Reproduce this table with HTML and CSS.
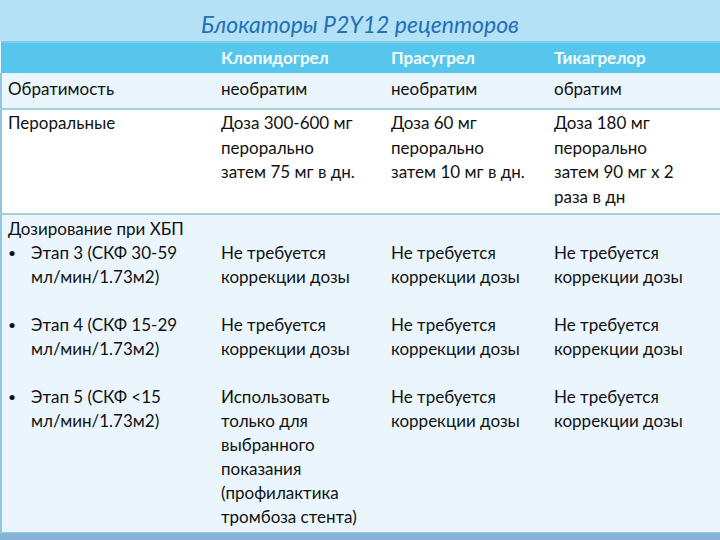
FILE: index.html
```html
<!DOCTYPE html>
<html lang="ru">
<head>
<meta charset="utf-8">
<link rel="stylesheet" href="styles.css">
</head>
<body>
<div class="page">
  <div class="title-band">
    <h1 class="title">Блокаторы P2Y12 рецепторов</h1>
  </div>
  <table class="grid">
    <colgroup>
      <col class="c1"><col class="c2"><col class="c3"><col class="c4">
    </colgroup>
    <thead>
      <tr>
        <th></th>
        <th>Клопидогрел</th>
        <th>Прасугрел</th>
        <th>Тикагрелор</th>
      </tr>
    </thead>
    <tbody>
      <tr class="row-light row-first">
        <td class="lead">Обратимость</td>
        <td>необратим</td>
        <td>необратим</td>
        <td>обратим</td>
      </tr>
      <tr class="row-white row-oral">
        <td class="lead">Пероральные</td>
        <td>Доза 300-600 мг<br>перорально<br>затем 75 мг в дн.</td>
        <td>Доза 60 мг<br>перорально<br>затем 10 мг в дн.</td>
        <td>Доза 180 мг<br>перорально<br>затем 90 мг х 2<br>раза в дн</td>
      </tr>
      <tr class="row-light row-ckd row-ckd-first">
        <td class="lead">Дозирование при ХБП
          <div class="bullet"><span class="dot">•</span><span class="btext">Этап 3 (СКФ 30-59 мл/мин/1.73м2)</span></div>
        </td>
        <td class="shift">Не требуется<br>коррекции дозы</td>
        <td class="shift">Не требуется<br>коррекции дозы</td>
        <td class="shift">Не требуется<br>коррекции дозы</td>
      </tr>
      <tr class="row-light row-ckd">
        <td class="lead">
          <div class="bullet"><span class="dot">•</span><span class="btext">Этап 4 (СКФ 15-29 мл/мин/1.73м2)</span></div>
        </td>
        <td>Не требуется<br>коррекции дозы</td>
        <td>Не требуется<br>коррекции дозы</td>
        <td>Не требуется<br>коррекции дозы</td>
      </tr>
      <tr class="row-light row-ckd-last">
        <td class="lead">
          <div class="bullet"><span class="dot">•</span><span class="btext">Этап 5 (СКФ &lt;15 мл/мин/1.73м2)</span></div>
        </td>
        <td>Использовать<br>только для<br>выбранного<br>показания<br>(профилактика<br>тромбоза стента)</td>
        <td>Не требуется<br>коррекции дозы</td>
        <td>Не требуется<br>коррекции дозы</td>
      </tr>
    </tbody>
  </table>
  <div class="bottom-bar"></div>
</div>
</body>
</html>
```
FILE: styles.css
```css
html, body {
  margin: 0;
  padding: 0;
}
body {
  width: 720px;
  height: 540px;
  overflow: hidden;
  background: #eaf5fd;
  font-family: Lato, "Noto Sans", "Liberation Sans", sans-serif;
  color: #111;
}
.page {
  width: 720px;
  height: 540px;
  display: flex;
  flex-direction: column;
}
.title-band {
  height: 41px;
  background: #b5e1f7;
  display: flex;
  align-items: center;
  justify-content: center;
}
.title {
  margin: 0;
  padding-top: 6px;
  font-size: 23px;
  font-style: italic;
  font-weight: 400;
  color: #2270b6;
}
.grid {
  width: 720px;
  border-collapse: collapse;
  table-layout: fixed;
  font-size: 17px;
  line-height: 24px;
}
.c1 { width: 212px; }
.c2 { width: 170px; }
.c3 { width: 163px; }
.c4 { width: 175px; }
.grid th,
.grid td {
  padding: 0 4px 0 8px;
  text-align: left;
  vertical-align: top;
}
.grid thead th {
  height: 29px;
  background: #57c6ed;
  border-top: 2px solid #80cde9;
  border-bottom: 1px solid #d9f2fb;
  color: #f4fbff;
  font-weight: 700;
  vertical-align: middle;
  padding-top: 0;
  padding-bottom: 1px;
}
.grid tbody td.lead {
  border-left: 2px solid #8fc6e4;
  padding-left: 6px;
}
.row-light td { background: #eaf5fd; }
.row-white td { background: #ffffff; }
.row-first td {
  padding-top: 3px;
  padding-bottom: 7px;
  border-top: 1px solid #a8dbe2;
  border-bottom: 2px solid #a2d0d8;
}
.row-oral td {
  padding-top: 1px;
  padding-bottom: 4px;
  line-height: 24.5px;
  border-bottom: 2px solid #a2d0d8;
}
.row-ckd td {
  padding-bottom: 24px;
}
.row-ckd-first td {
  padding-top: 2px;
}
.row-ckd-first td.shift {
  padding-top: 26px;
}
.row-ckd-last td {
  padding-bottom: 3px;
}
.bullet {
  display: flex;
}
.dot {
  width: 23px;
  flex: none;
  font-size: 14px;
  padding-left: 0;
}
.btext {
  flex: 1;
  padding-right: 30px;
}
.bottom-bar {
  flex: 1;
  background: #88b3d9;
  border-top: 1px solid #8fd3d3;
}
```
